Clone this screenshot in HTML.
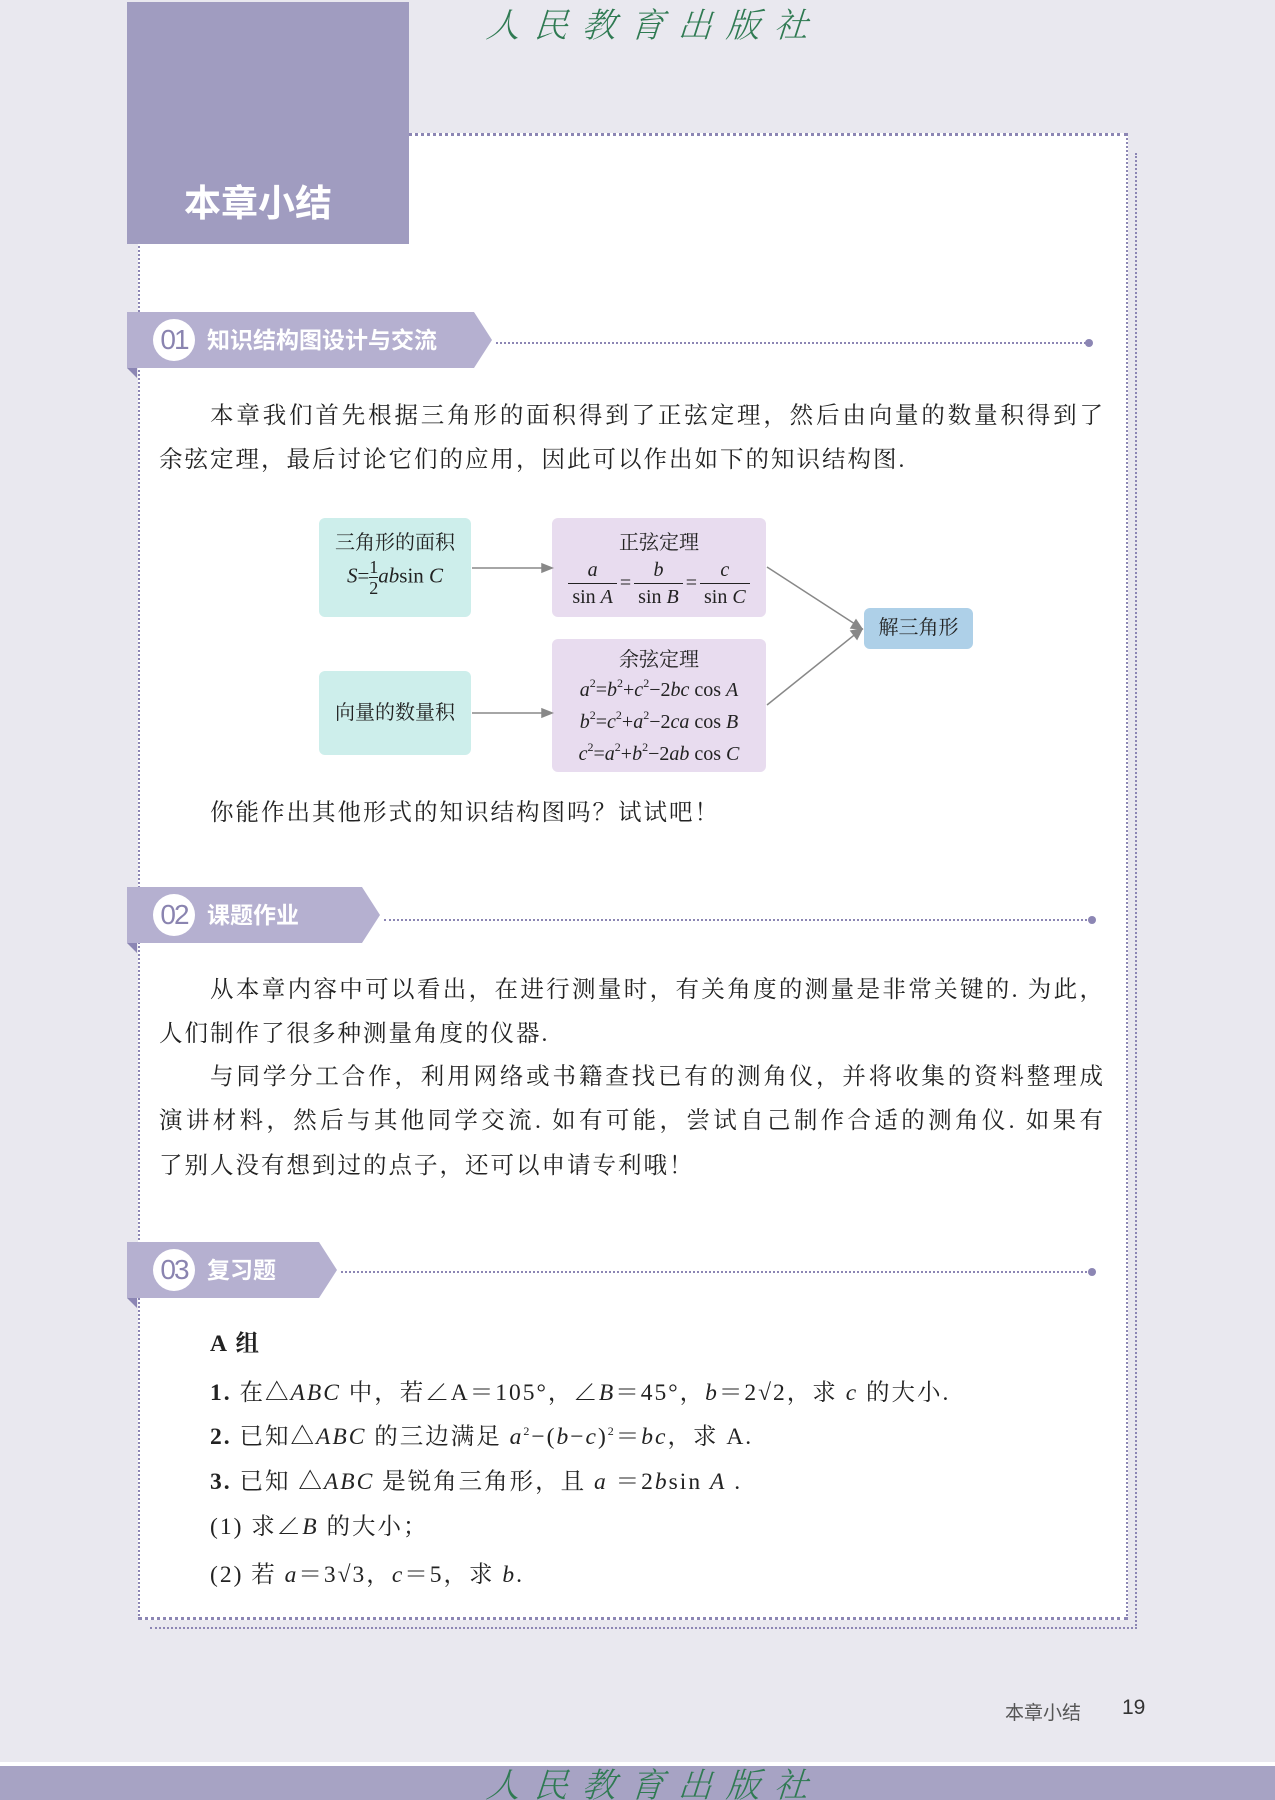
<!DOCTYPE html>
<html><head><meta charset="utf-8"><style>
*{margin:0;padding:0;box-sizing:border-box}
body{width:1275px;height:1800px;background:#e9e8ef;position:relative;overflow:hidden;font-family:"Liberation Serif","Noto Serif CJK SC",serif;color:#222}
.abs{position:absolute}
.logo{position:absolute;font-family:"Noto Serif CJK SC",serif;color:#2f7a52;font-size:34px;letter-spacing:14px;transform:skewX(-18deg);white-space:nowrap;font-weight:300}
.card{position:absolute;left:138px;top:133px;width:990px;height:1487px;background:#fff;border-top:3px dotted #8c86b4;border-left:2px dotted #8c86b4;border-right:2px dotted #8c86b4;border-bottom:3px dotted #8c86b4}
.bar{position:absolute;left:127px;height:56px;background:#b5b0d0}
.bar .c{position:absolute;left:26px;top:7px;width:42px;height:42px;border-radius:50%;background:#fff;color:#8a84b0;font-family:"Liberation Sans",sans-serif;font-size:28px;line-height:42px;text-align:center;letter-spacing:-2px}
.bar .t{position:absolute;left:80px;top:0;line-height:56px;color:#fff;font-family:"Liberation Sans","Noto Sans CJK SC",sans-serif;font-weight:bold;font-size:23px}
.fold{position:absolute;left:127px;width:0;height:0;border-top:10px solid #8c86b4;border-left:10px solid transparent}
.dl{position:absolute;height:0;border-top:2px dotted #8c86b4}
.dot{position:absolute;width:8px;height:8px;border-radius:50%;background:#8c86b4}
.p{position:absolute;font-size:23.5px;line-height:44px;white-space:nowrap;left:159px;letter-spacing:2px}
.f{text-align:justify;text-align-last:justify;white-space:normal}
.box{position:absolute;border-radius:6px;font-size:20px;text-align:center;color:#222}
i{font-style:italic}
sup{font-size:12px;vertical-align:0;position:relative;top:-9px}
</style></head><body>
<div class="logo" style="left:490px;top:-2px">人民教育出版社</div>
<div class="abs" style="left:1135px;top:153px;height:1476px;border-left:2px dotted #8c86b4"></div>
<div class="abs" style="left:150px;top:1627px;width:987px;border-top:2px dotted #8c86b4"></div>
<div class="card"></div>
<div class="abs" style="left:127px;top:2px;width:282px;height:242px;background:#a09cc0"></div>
<div class="abs" style="left:184px;top:180px;color:#fff;font-family:'Liberation Sans','Noto Sans CJK SC',sans-serif;font-weight:bold;font-size:37px;line-height:48px">本章小结</div>

<div class="bar" style="top:312px;width:365px;clip-path:polygon(0 0,347px 0,365px 50%,347px 100%,0 100%)"><div class="c">01</div><div class="t">知识结构图设计与交流</div></div>
<div class="fold" style="top:368px"></div>
<div class="dl" style="left:496px;top:342px;width:590px"></div><div class="dot" style="left:1085px;top:339px"></div>

<div class="p f" style="top:394px;left:210px;width:895px">本章我们首先根据三角形的面积得到了正弦定理，然后由向量的数量积得到了</div>
<div class="p" style="top:438px">余弦定理，最后讨论它们的应用，因此可以作出如下的知识结构图.</div>

<div class="box" style="left:319px;top:518px;width:152px;height:99px;background:#cdeeeb;padding-top:8px">三角形的面积<div style="margin-top:2px;font-size:21px"><i>S</i>=<span style="display:inline-block;vertical-align:middle;line-height:20px;font-size:18px">1<br><span style="border-top:1px solid #222;display:block">2</span></span><i>ab</i>sin <i>C</i></div></div>
<div class="box" style="left:552px;top:518px;width:214px;height:99px;background:#e8dcef;padding-top:8px">正弦定理
<div style="margin-top:2px;font-size:20px;display:flex;justify-content:center;align-items:center;gap:3px">
<span style="line-height:26px"><i>a</i><br><span style="border-top:1px solid #222;display:block;padding:0 4px">sin <i>A</i></span></span>=<span style="line-height:26px"><i>b</i><br><span style="border-top:1px solid #222;display:block;padding:0 4px">sin <i>B</i></span></span>=<span style="line-height:26px"><i>c</i><br><span style="border-top:1px solid #222;display:block;padding:0 4px">sin <i>C</i></span></span></div></div>
<div class="box" style="left:319px;top:671px;width:152px;height:84px;background:#cdeeeb;line-height:84px">向量的数量积</div>
<div class="box" style="left:552px;top:639px;width:214px;height:133px;background:#e8dcef;padding-top:6px;line-height:30px;font-size:20px">余弦定理<br><i>a</i><sup>2</sup>=<i>b</i><sup>2</sup>+<i>c</i><sup>2</sup>−2<i>bc</i> cos <i>A</i><br><i>b</i><sup>2</sup>=<i>c</i><sup>2</sup>+<i>a</i><sup>2</sup>−2<i>ca</i> cos <i>B</i><br><i>c</i><sup>2</sup>=<i>a</i><sup>2</sup>+<i>b</i><sup>2</sup>−2<i>ab</i> cos <i>C</i></div>
<div class="box" style="left:864px;top:608px;width:109px;height:41px;background:#aed0e8;line-height:41px">解三角形</div>
<svg class="abs" style="left:0;top:0" width="1275" height="900"><g stroke="#888" stroke-width="1.5" fill="#888">
<line x1="472" y1="568" x2="548" y2="568"/><polygon points="552,568 542,564 542,572"/>
<line x1="472" y1="713" x2="548" y2="713"/><polygon points="552,713 542,709 542,717"/>
<line x1="767" y1="567" x2="858" y2="626"/><polygon points="862,629 851,628 856,620"/>
<line x1="767" y1="705" x2="858" y2="632"/><polygon points="862,629 857,639 851,631"/></g></svg>

<div class="p" style="top:791px;left:210px">你能作出其他形式的知识结构图吗？试试吧！</div>

<div class="bar" style="top:887px;width:253px;clip-path:polygon(0 0,235px 0,253px 50%,235px 100%,0 100%)"><div class="c">02</div><div class="t">课题作业</div></div>
<div class="fold" style="top:943px"></div>
<div class="dl" style="left:384px;top:919px;width:707px"></div><div class="dot" style="left:1088px;top:916px"></div>

<div class="p f" style="top:968px;left:210px;width:895px">从本章内容中可以看出，在进行测量时，有关角度的测量是非常关键的. 为此，</div>
<div class="p" style="top:1012px">人们制作了很多种测量角度的仪器.</div>
<div class="p f" style="top:1055px;left:210px;width:895px">与同学分工合作，利用网络或书籍查找已有的测角仪，并将收集的资料整理成</div>
<div class="p f" style="top:1099px;width:946px">演讲材料，然后与其他同学交流. 如有可能，尝试自己制作合适的测角仪. 如果有</div>
<div class="p" style="top:1144px">了别人没有想到过的点子，还可以申请专利哦！</div>

<div class="bar" style="top:1242px;width:210px;clip-path:polygon(0 0,192px 0,210px 50%,192px 100%,0 100%)"><div class="c">03</div><div class="t">复习题</div></div>
<div class="fold" style="top:1298px"></div>
<div class="dl" style="left:341px;top:1271px;width:750px"></div><div class="dot" style="left:1088px;top:1268px"></div>

<div class="p" style="top:1322px;left:210px;font-weight:bold">A 组</div>
<div class="p" style="top:1371px;left:210px"><b>1.</b> 在△<i>ABC</i> 中，若∠A＝105°，∠<i>B</i>＝45°，<i>b</i>＝2√2，求 <i>c</i> 的大小.</div>
<div class="p" style="top:1415px;left:210px"><b>2.</b> 已知△<i>ABC</i> 的三边满足 <i>a</i><sup>2</sup>−(<i>b</i>−<i>c</i>)<sup>2</sup>＝<i>bc</i>，求 A.</div>
<div class="p" style="top:1460px;left:210px"><b>3.</b> 已知 △<i>ABC</i> 是锐角三角形，且 <i>a</i> ＝2<i>b</i>sin <i>A</i> .</div>
<div class="p" style="top:1505px;left:210px">(1) 求∠<i>B</i> 的大小；</div>
<div class="p" style="top:1553px;left:210px">(2) 若 <i>a</i>＝3√3，<i>c</i>＝5，求 <i>b</i>.</div>

<div class="abs" style="left:1005px;top:1698px;font-family:'Liberation Sans','Noto Sans CJK SC',sans-serif;font-size:19px;color:#555">本章小结</div>
<div class="abs" style="left:1122px;top:1696px;font-family:'Liberation Sans',sans-serif;font-size:21px;color:#333">19</div>

<div class="abs" style="left:0;top:1762px;width:1275px;height:4px;background:#fff"></div>
<div class="abs" style="left:0;top:1766px;width:1275px;height:34px;background:#a7a3c4;overflow:hidden"><div class="logo" style="left:490px;top:-8px">人民教育出版社</div></div>
</body></html>
